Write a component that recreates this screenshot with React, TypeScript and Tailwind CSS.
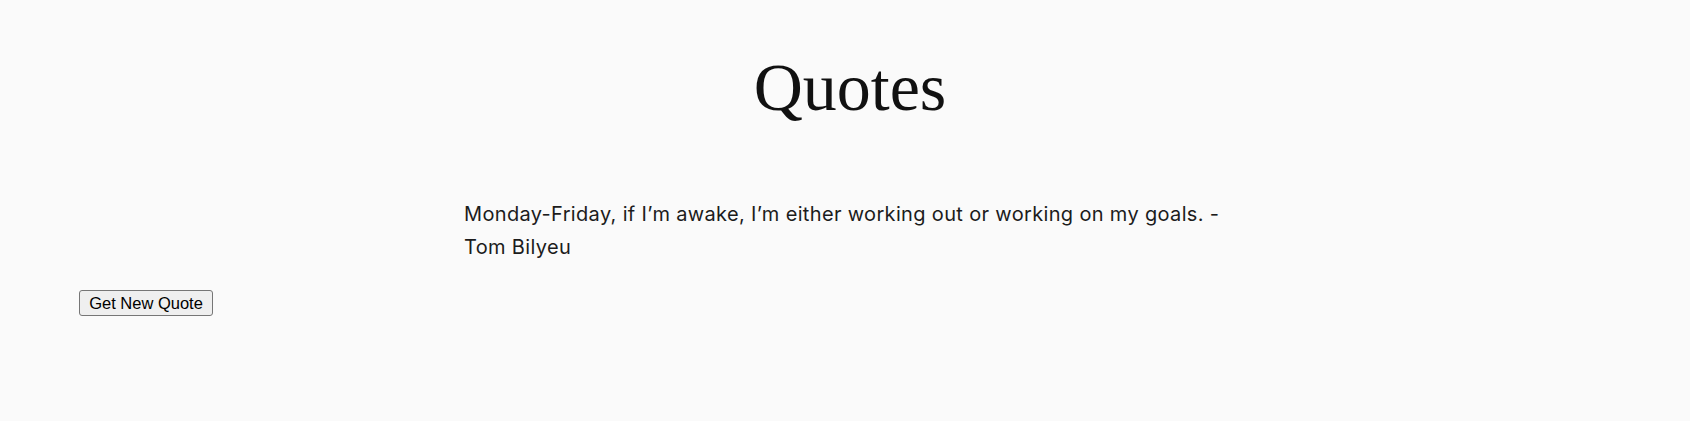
import React from 'react';

export default function App() {
    return (
        <div className="min-h-[421px] w-full bg-[#fafafa] pt-[53px]">
            <h1 className="pl-[10px] text-center font-['Liberation_Serif',serif] text-[68px] leading-none font-normal text-[#111111]">
                Quotes
            </h1>

            <div className="mx-auto mt-[77px] w-[762px]">
                <p className="font-['Inter',sans-serif] text-[20px] leading-[33px] tracking-[0.34px] text-[#1c1c1c]">
                    Monday-Friday, if I’m awake, I’m either working out or working on my goals. - Tom Bilyeu
                </p>
            </div>

            <div className="mt-[26px] pl-[79px]">
                <button className="h-[26px] w-[134px] rounded-[3px] border border-[#767676] bg-[#efefef] font-['Liberation_Sans',sans-serif] text-[16.5px] leading-[18px] text-black">
                    Get New Quote
                </button>
            </div>
        </div>
    );
}
